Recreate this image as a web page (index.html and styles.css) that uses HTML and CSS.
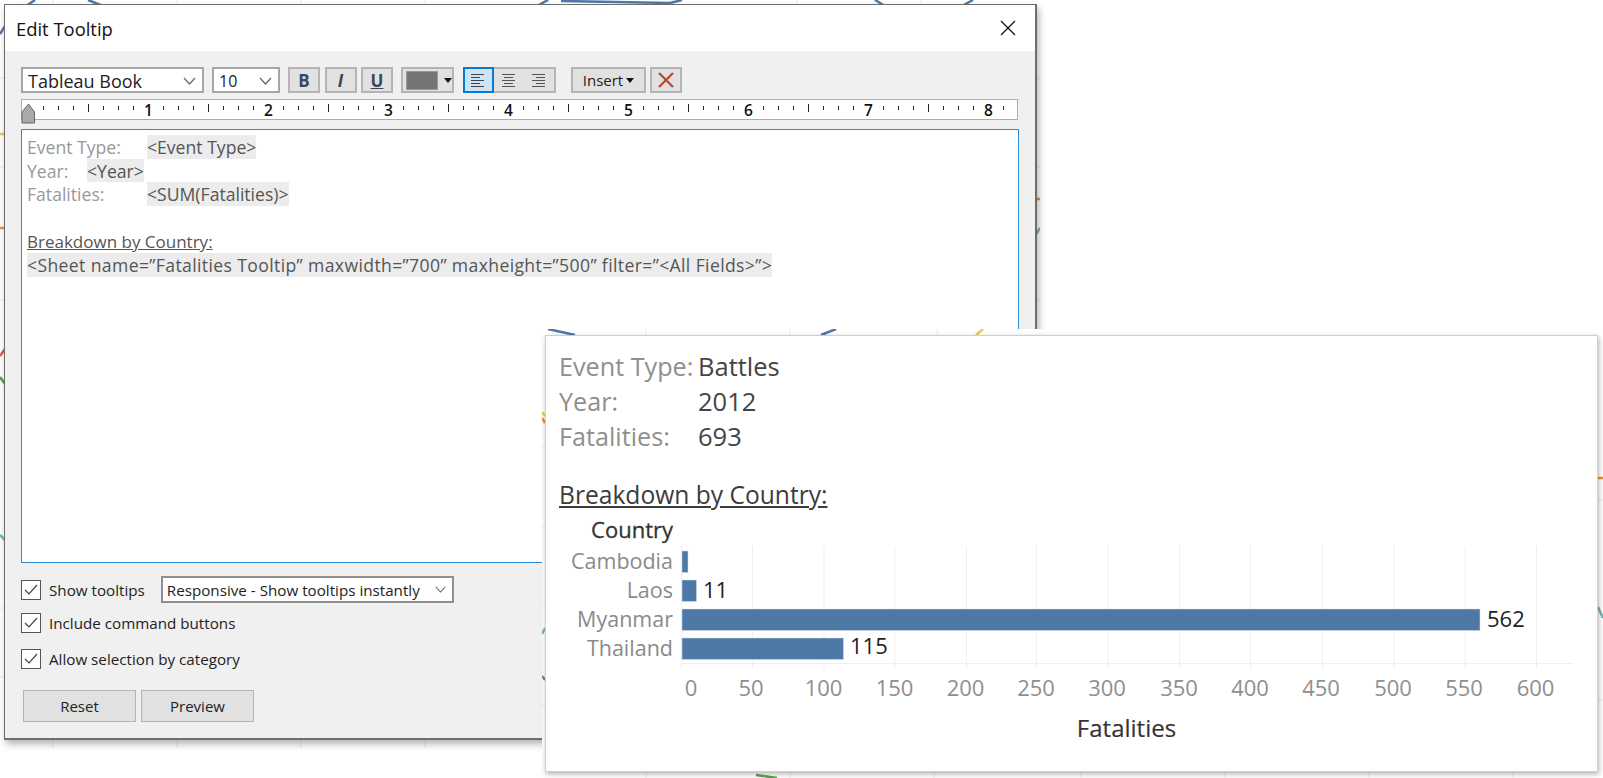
FILE: index.html
```html
<!DOCTYPE html>
<html lang="en">
<head>
<meta charset="UTF-8">
<meta name="viewport" content="width=device-width, initial-scale=1.0">
<title>Edit Tooltip</title>
<link rel="stylesheet" href="styles.css">
</head>
<body>

<!-- dashboard behind the dialog, only its edges show -->
<svg class="back-sheet" width="1040" height="748" viewBox="0 0 1040 748">
  <path class="grid-line" d="M53 0V748M177 0V748M301 0V748M425 0V748M549 0V748M673 0V748M797 0V748M921 0V748M0 78H1040M0 167H1040M0 300H1040M0 608H1040M0 677H1040"/>
  <path class="mark mark-blue" d="M26 6L35 0M88 0L103 6M537 6L548 0M561 1L670 3L682 0M875 0L885 6M962 6L973 0M0 34L5 26"/>
  <path class="mark mark-yellow" d="M0 134H5"/>
  <path class="mark mark-orange" d="M0 228H5M1035 199H1040"/>
  <path class="mark mark-teal" d="M1035 236L1040 228M0 535L5 540"/>
  <path class="mark mark-red" d="M0 356L5 349"/>
  <path class="mark mark-green" d="M0 377L5 384"/>
</svg>

<div class="dialog">
  <div class="title-bar">
    <span class="title-text">Edit Tooltip</span>
    <svg class="close-icon" width="16" height="16" viewBox="0 0 16 16"><path d="M1 1L15 15M15 1L1 15"/></svg>
  </div>

  <div class="dialog-body">
    <div class="toolbar">
      <div class="combo combo-font">Tableau Book
        <svg class="chevron" width="13" height="8" viewBox="0 0 13 8"><path d="M1 1L6.5 7L12 1"/></svg>
      </div>
      <div class="combo combo-size">10
        <svg class="chevron" width="13" height="8" viewBox="0 0 13 8"><path d="M1 1L6.5 7L12 1"/></svg>
      </div>
      <div class="tool-btn style-btn style-bold">B</div>
      <div class="tool-btn style-btn style-italic">I</div>
      <div class="tool-btn style-btn style-under">U</div>
      <div class="tool-btn color-btn"><span class="swatch"></span><span class="caret"></span></div>
      <div class="align-group">
        <div class="tool-btn align-btn active">
          <svg width="14" height="13" viewBox="0 0 14 13"><path d="M0 .5H13M0 3.5H9M0 6.5H13M0 9.5H9M0 12.5H13"/></svg>
        </div>
        <div class="tool-btn align-btn">
          <svg width="14" height="13" viewBox="0 0 14 13"><path d="M0 .5H13M2 3.5H11M0 6.5H13M2 9.5H11M0 12.5H13"/></svg>
        </div>
        <div class="tool-btn align-btn">
          <svg width="14" height="13" viewBox="0 0 14 13"><path d="M0 .5H13M4 3.5H13M0 6.5H13M4 9.5H13M0 12.5H13"/></svg>
        </div>
      </div>
      <div class="tool-btn insert-btn">Insert<span class="caret"></span></div>
      <div class="tool-btn clear-btn">
        <svg width="16" height="16" viewBox="0 0 16 16"><path d="M1 1L15 15M15 1L1 15"/></svg>
      </div>
    </div>

    <svg class="ruler" width="997" height="21" viewBox="21 99 997 21">
      <path class="tick" d="M43.5 106v4M58.5 106v4M73.5 106v4M103.5 106v4M118.5 106v4M133.5 106v4
        M163.5 106v4M178.5 106v4M193.5 106v4M223.5 106v4M238.5 106v4M253.5 106v4
        M283.5 106v4M298.5 106v4M313.5 106v4M343.5 106v4M358.5 106v4M373.5 106v4
        M403.5 106v4M418.5 106v4M433.5 106v4M463.5 106v4M478.5 106v4M493.5 106v4
        M523.5 106v4M538.5 106v4M553.5 106v4M583.5 106v4M598.5 106v4M613.5 106v4
        M643.5 106v4M658.5 106v4M673.5 106v4M703.5 106v4M718.5 106v4M733.5 106v4
        M763.5 106v4M778.5 106v4M793.5 106v4M823.5 106v4M838.5 106v4M853.5 106v4
        M883.5 106v4M898.5 106v4M913.5 106v4M943.5 106v4M958.5 106v4M973.5 106v4M1003.5 106v4
        M88.5 104v8M208.5 104v8M328.5 104v8M448.5 104v8M568.5 104v8M688.5 104v8M808.5 104v8M928.5 104v8"/>
      <text class="ruler-num" x="148.5" y="116">1</text>
      <text class="ruler-num" x="268.5" y="116">2</text>
      <text class="ruler-num" x="388.5" y="116">3</text>
      <text class="ruler-num" x="508.5" y="116">4</text>
      <text class="ruler-num" x="628.5" y="116">5</text>
      <text class="ruler-num" x="748.5" y="116">6</text>
      <text class="ruler-num" x="868.5" y="116">7</text>
      <text class="ruler-num" x="988.5" y="116">8</text>
      <path class="thumb" d="M28.5 104L34.5 112V123H22V112Z"/>
    </svg>

    <div class="editor">
      <div class="ed-row"><span class="ed-label ed-wide">Event Type:</span><span class="ed-field">&lt;Event Type&gt;</span></div>
      <div class="ed-row"><span class="ed-label ed-short">Year:</span><span class="ed-field">&lt;Year&gt;</span></div>
      <div class="ed-row"><span class="ed-label ed-wide">Fatalities:</span><span class="ed-field">&lt;SUM(Fatalities)&gt;</span></div>
      <div class="ed-row"></div>
      <div class="ed-row"><span class="ed-head">Breakdown by Country:</span></div>
      <div class="ed-row"><span class="ed-field ed-sheet">&lt;Sheet name=”Fatalities Tooltip” maxwidth=”700” maxheight=”500” filter=”&lt;All Fields&gt;”&gt;</span></div>
    </div>

    <div class="option-row option-first">
      <span class="check"><svg width="14" height="12" viewBox="0 0 14 12"><path d="M1 6L5 10L13 1"/></svg></span>
      <span class="option-label">Show tooltips</span>
      <div class="combo combo-mode">Responsive - Show tooltips instantly
        <svg class="chevron" width="11" height="7" viewBox="0 0 13 8"><path d="M1 1L6.5 7L12 1"/></svg>
      </div>
    </div>
    <div class="option-row option-second">
      <span class="check"><svg width="14" height="12" viewBox="0 0 14 12"><path d="M1 6L5 10L13 1"/></svg></span>
      <span class="option-label">Include command buttons</span>
    </div>
    <div class="option-row option-third">
      <span class="check"><svg width="14" height="12" viewBox="0 0 14 12"><path d="M1 6L5 10L13 1"/></svg></span>
      <span class="option-label">Allow selection by category</span>
    </div>

    <div class="footer-btns">
      <div class="push-btn">Reset</div>
      <div class="push-btn">Preview</div>
    </div>
  </div>
</div>

<!-- pasted crop of the tooltip preview, sits on top of the dialog -->
<div class="preview-crop">
  <svg class="crop-marks" width="1061" height="449" viewBox="542 329 1061 449">
    <path class="grid-line" d="M646 329V778M790 329V778M937 329V400M934 770V778M1081 770V778M1225 770V778M1369 770V778M1513 770V778M542 447H546M542 527H546M542 603H546M542 705H546M1597 500H1603M1597 700H1603"/>
    <path class="mark mark-blue" d="M548 329L575 335M821 335L836 329"/>
    <path class="mark mark-yellow" d="M976 335L983 329M542 412L545 416"/>
    <path class="mark mark-orange" d="M542 418L545 423M1598 478H1603"/>
    <path class="mark mark-teal" d="M542 634L545 628M1598 607L1603 618"/>
    <path class="mark mark-green" d="M542 676L545 680M756 775L777 778"/>
  </svg>

  <div class="tip-card">
    <div class="tip-text">
      <div class="tip-row"><span class="tip-label">Event Type:</span><span class="tip-value">Battles</span></div>
      <div class="tip-row"><span class="tip-label">Year:</span><span class="tip-value">2012</span></div>
      <div class="tip-row"><span class="tip-label">Fatalities:</span><span class="tip-value">693</span></div>
      <div class="tip-head">Breakdown by Country:</div>
    </div>

    <svg class="tip-chart" width="1050" height="261" viewBox="546 511 1050 261">
      <path class="chart-grid" d="M681.5 546V669M752.5 546V669M824 546V669M895 546V669M966.5 546V669M1036.5 546V669M1108 546V669M1179.5 546V669M1250.5 546V669M1322.5 546V669M1394 546V669M1465 546V669M1536.5 546V669M681 663.5H1573"/>

      <text class="chart-axis-y" x="673" y="538">Country</text>

      <text class="chart-cat" x="673" y="569">Cambodia</text>
      <text class="chart-cat" x="673" y="598">Laos</text>
      <text class="chart-cat" x="673" y="627">Myanmar</text>
      <text class="chart-cat" x="673" y="656">Thailand</text>

      <rect class="chart-bar" x="682" y="551" width="6" height="21.5"/>
      <rect class="chart-bar" x="682" y="580" width="14.5" height="21.5"/>
      <rect class="chart-bar" x="682" y="609" width="798" height="21.5"/>
      <rect class="chart-bar" x="682" y="638" width="161.5" height="21.5"/>

      <text class="chart-val" x="703" y="598">11</text>
      <text class="chart-val" x="1487" y="627">562</text>
      <text class="chart-val" x="850" y="654">115</text>

      <text class="chart-tick" x="691" y="696">0</text>
      <text class="chart-tick" x="751" y="696">50</text>
      <text class="chart-tick" x="823.5" y="696">100</text>
      <text class="chart-tick" x="894.5" y="696">150</text>
      <text class="chart-tick" x="965.5" y="696">200</text>
      <text class="chart-tick" x="1036" y="696">250</text>
      <text class="chart-tick" x="1107" y="696">300</text>
      <text class="chart-tick" x="1179" y="696">350</text>
      <text class="chart-tick" x="1250" y="696">400</text>
      <text class="chart-tick" x="1321" y="696">450</text>
      <text class="chart-tick" x="1393" y="696">500</text>
      <text class="chart-tick" x="1464" y="696">550</text>
      <text class="chart-tick" x="1535.5" y="696">600</text>

      <text class="chart-axis-x" x="1126.5" y="737">Fatalities</text>
    </svg>
  </div>
</div>

</body>
</html>
```

FILE: styles.css
```css
html, body {
  margin: 0;
  height: 100%;
  overflow: hidden;
}

body {
  position: relative;
  background-color: #fff;
  font-family: "Open Sans", "Noto Sans", sans-serif;
  color: #222;
}

/* dashboard behind everything */
.back-sheet {
  position: absolute;
  left: 0;
  top: 0;
}

.grid-line {
  fill: none;
  stroke: #ececec;
  stroke-width: 1;
}

.mark {
  fill: none;
  stroke-width: 2.5;
}

.mark-blue { stroke: #4e79a7; }
.mark-yellow { stroke: #edc948; }
.mark-orange { stroke: #f28e2b; }
.mark-teal { stroke: #76b7b2; }
.mark-red { stroke: #e15759; }
.mark-green { stroke: #59a14f; }

/* dialog window */
.dialog {
  position: absolute;
  left: 4px;
  top: 4px;
  width: 1030px;
  height: 733px;
  border: 1px solid #6e6e6e;
  border-width: 1px 2px 2px 1px;
  background-color: #f0f0f0;
  box-shadow: 2px 4px 7px rgba(0, 0, 0, 0.3);
  display: flex;
  flex-direction: column;
}

.title-bar {
  height: 46px;
  flex: none;
  background-color: #fff;
  display: flex;
  align-items: center;
  justify-content: space-between;
  padding: 0 19px 0 11px;
}

.title-text {
  font-size: 18.4px;
  color: #111;
}

.close-icon path {
  fill: none;
  stroke: #111;
  stroke-width: 1.3;
}

.dialog-body {
  flex: 1;
  padding: 16px 16px 0;
  display: flex;
  flex-direction: column;
  min-height: 0;
}

/* toolbar */
.toolbar {
  display: flex;
  height: 26px;
  flex: none;
}

.combo {
  box-sizing: border-box;
  display: flex;
  align-items: center;
  justify-content: space-between;
  background-color: #fff;
  border: 2px solid #a6a6a6;
}

.chevron path {
  fill: none;
  stroke: #666;
  stroke-width: 1.2;
}

.combo-font {
  width: 183px;
  padding: 2px 6px 0 5px;
  font-size: 18px;
  color: #222;
}

.combo-size {
  width: 68px;
  margin-left: 8px;
  padding: 2px 6px 0 5px;
  font-size: 16px;
}

.tool-btn {
  box-sizing: border-box;
  height: 26px;
  display: flex;
  align-items: center;
  justify-content: center;
  background-color: #e1e1e1;
  border: 2px solid #b4b4b4;
}

.style-btn {
  width: 32px;
  margin-left: 4.5px;
  font-size: 17px;
  font-weight: 700;
  color: #3a4657;
}

.style-bold { margin-left: 8px; }
.style-italic { font-style: italic; }
.style-under { text-decoration: underline; }

.color-btn {
  width: 53px;
  margin-left: 8px;
  padding-left: 3px;
  justify-content: flex-start;
}

.swatch {
  width: 30px;
  height: 17px;
  background-color: #757575;
  border: 1px solid #999;
  margin-right: 6px;
}

.caret {
  width: 0;
  height: 0;
  border-left: 4.5px solid transparent;
  border-right: 4.5px solid transparent;
  border-top: 5px solid #111;
}

.align-group {
  display: flex;
  margin-left: 8.5px;
}

.align-btn {
  width: 31px;
  border-left-width: 0;
  border-right-width: 0;
}

.align-btn:last-child {
  border-right-width: 2px;
}

.align-btn path {
  fill: none;
  stroke: #555;
  stroke-width: 1;
}

.align-btn.active {
  background-color: #cce4f7;
  border: 2px solid #0a7ad1;
}

.align-btn.active path {
  stroke: #444;
}

.insert-btn {
  width: 75px;
  margin-left: 15.5px;
  font-size: 15px;
  color: #222;
  gap: 3px;
}

.clear-btn {
  width: 32px;
  margin-left: 4px;
}

.clear-btn path {
  fill: none;
  stroke: #b4492f;
  stroke-width: 2.2;
}

/* ruler */
.ruler {
  display: block;
  flex: none;
  margin-top: 6px;
  margin-left: 0;
  background-color: #fff;
  box-shadow: inset 0 0 0 1px #aeaeae;
  overflow: visible;
}

.tick {
  fill: none;
  stroke: #222;
  stroke-width: 1;
}

.ruler-num {
  font-size: 15.5px;
  font-weight: 600;
  fill: #111;
  text-anchor: middle;
}

.thumb {
  fill: #a9a9a9;
  stroke: #666;
  stroke-width: 1;
}

/* editor box */
.editor {
  box-sizing: border-box;
  flex: none;
  height: 434px;
  margin-top: 9px;
  padding: 5px 5px 0;
  background-color: #fff;
  border: 1px solid #2a8bd6;
  font-size: 17.6px;
  color: #555;
}

.ed-row {
  display: flex;
  height: 23.6px;
  line-height: 25px;
}

.ed-label {
  color: #999;
}

.ed-wide { width: 120px; }
.ed-short { width: 60px; }

.ed-field {
  height: 23.6px;
  background-color: #ececec;
  white-space: nowrap;
}

.ed-sheet {
  letter-spacing: 0.37px;
}

.ed-head {
  font-size: 17px;
  text-decoration: underline;
}

/* options */
.option-row {
  display: flex;
  align-items: center;
  flex: none;
  font-size: 15.2px;
  color: #222;
}

.option-first {
  height: 27px;
  margin-top: 13px;
}

.option-second {
  margin-top: 8px;
  height: 24px;
}

.option-third {
  margin-top: 12px;
  height: 24px;
}

.check {
  box-sizing: border-box;
  width: 20px;
  height: 20px;
  flex: none;
  display: flex;
  align-items: center;
  justify-content: center;
  background-color: #fff;
  border: 1.5px solid #555;
}

.check path {
  fill: none;
  stroke: #444;
  stroke-width: 1.2;
}

.option-label {
  margin-left: 8px;
}

.combo-mode {
  width: 293px;
  height: 27px;
  margin-left: 16px;
  padding: 0 6px 0 4px;
  font-size: 15.2px;
  border-color: #8f8f8f;
}

.footer-btns {
  display: flex;
  gap: 5px;
  margin-top: 19px;
  padding-left: 2px;
}

.push-btn {
  box-sizing: border-box;
  width: 113px;
  height: 32px;
  display: flex;
  align-items: center;
  justify-content: center;
  background-color: #e1e1e1;
  border: 1.5px solid #b4b4b4;
  font-size: 15px;
  color: #222;
}

/* tooltip preview crop */
.preview-crop {
  position: absolute;
  left: 542px;
  top: 329px;
  width: 1061px;
  height: 449px;
  background-color: #fff;
}

.crop-marks {
  position: absolute;
  left: 0;
  top: 0;
}

.tip-card {
  position: absolute;
  left: 3px;
  top: 6px;
  box-sizing: border-box;
  width: 1053px;
  height: 437px;
  background-color: #fff;
  border: 1px solid #cfcfcf;
  box-shadow: 1px 2px 5px rgba(0, 0, 0, 0.3);
}

.tip-text {
  padding: 13px 13px 0;
  height: 175px;
  box-sizing: border-box;
}

.tip-row {
  display: flex;
  height: 35px;
  line-height: 35px;
  font-size: 25.5px;
}

.tip-label {
  width: 139px;
  font-size: 25.2px;
  color: #8f8f8f;
}

.tip-value {
  color: #444;
}

.tip-head {
  margin-top: 23px;
  height: 35px;
  line-height: 35px;
  font-size: 24.6px;
  color: #3c3c3c;
  text-decoration: underline;
  white-space: nowrap;
}

.tip-chart {
  display: block;
}

.chart-grid {
  fill: none;
  stroke: #efefef;
  stroke-width: 1;
}

.chart-bar {
  fill: #4e79a7;
  stroke: #d7e0ea;
  stroke-width: 0.5;
}

.chart-cat {
  font-size: 21.5px;
  fill: #8a8a8a;
  text-anchor: end;
}

.chart-val {
  font-size: 22px;
  fill: #222;
}

.chart-tick {
  font-size: 22px;
  fill: #8f8f8f;
  text-anchor: middle;
}

.chart-axis-y {
  font-size: 22px;
  fill: #333;
  stroke: #333;
  stroke-width: 0.3px;
  text-anchor: end;
}

.chart-axis-x {
  font-size: 24px;
  fill: #333;
  stroke: #333;
  stroke-width: 0.15px;
  text-anchor: middle;
}
```
